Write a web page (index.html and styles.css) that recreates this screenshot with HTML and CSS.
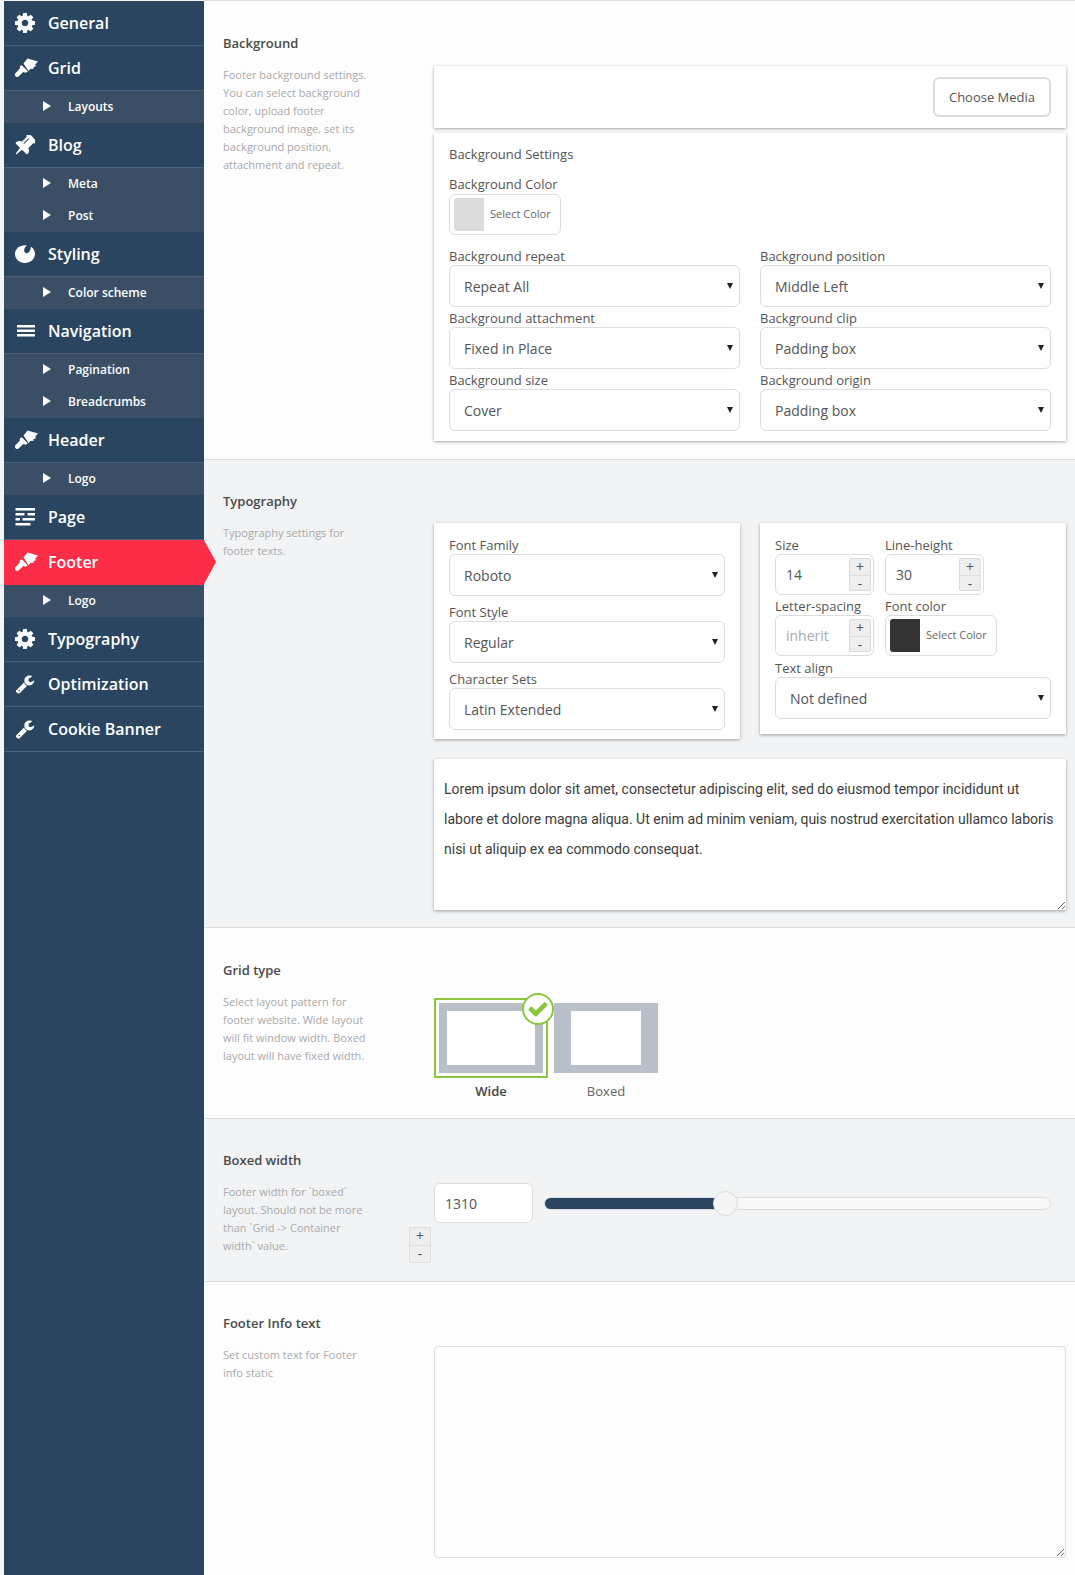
FILE: index.html
```html
<!DOCTYPE html>
<html lang="en">
<head>
  <meta charset="UTF-8">
  <title>Footer settings</title>
  <link rel="stylesheet" href="styles.css">
</head>
<body>
  <svg class="defs" width="0" height="0">
    <defs>
      <symbol id="i-cog" viewBox="0 0 1536 1536"><path d="M1024 768q0-106-75-181t-181-75-181 75-75 181 75 181 181 75 181-75 75-181zm512-109v222q0 12-8 23t-20 13l-185 28q-19 54-39 91 35 50 107 138 10 12 10 25t-9 23q-27 37-99 108t-94 71q-12 0-26-9l-138-108q-44 23-91 38-16 136-29 186-7 28-36 28h-222q-14 0-24.500-8.500t-11.500-21.500l-28-184q-49-16-90-37l-141 107q-10 9-25 9-14 0-25-11-126-114-165-168-7-10-7-23 0-12 8-23 15-21 51-66.500t54-70.500q-27-50-41-99l-183-27q-13-2-21-12.500t-8-23.500v-222q0-12 8-23t19-13l186-28q14-46 39-92-40-57-107-138-10-12-10-24 0-10 9-23 26-36 98.500-107.500t94.500-71.500q13 0 26 10l138 107q44-23 91-38 16-136 29-186 7-28 36-28h222q14 0 24.500 8.500t11.500 21.500l28 184q49 16 90 37l142-107q9-9 24-9 13 0 25 10 129 119 165 170 7 8 7 22 0 12-8 23-15 21-51 66.500t-54 70.500q26 50 41 98l183 28q13 2 21 12.500t8 23.500z"/></symbol>
      <symbol id="i-brush" viewBox="0 0 23 19"><path d="M8.500 5.500 12.500 0.500l10.500 3-3 3.200 1.300 1.300-3 1.200.4 1.500-3.400.2-1.800 2.200z"/><path d="M6.800 7.200l6 6-1.900 1.500-2.600-.7-4.500 4.300a2.300 2.300 0 0 1-3.200-.1 2.300 2.300 0 0 1 0-3.200l4.300-4.400-.1-2.300z"/></symbol>
      <symbol id="i-pin" viewBox="200 200 1392 1392"><path transform="rotate(45 896 896) translate(320 0)" d="M480 864v-448q0-14-9-23t-23-9-23 9-9 23v448q0 14 9 23t23 9 23-9 9-23zm672 352q0 26-19 45t-45 19h-429l-51 483q-2 12-10.500 20.500t-20.500 8.500h-1q-27 0-32-27l-76-485h-404q-26 0-45-19t-19-45q0-123 78.500-221.500t177.500-98.500v-512q-52 0-90-38t-38-90 38-90 90-38h640q52 0 90 38t38 90-38 90-90 38v512q99 0 177.500 98.500t78.500 221.500z"/></symbol>
      <symbol id="i-palette" viewBox="0 -1 20 20"><path d="M11.800.4C10 1.600 8.800 4 9.300 6.300c.4 1.800 2.600 2.500 4 1.400 1.500-1.200 2.300-3.600 2.700-6C18.400 3.300 20 5.800 20 8.800c0 5.200-4.400 9.200-10 9.200S0 14 0 9 4.800-.4 11.800.4z"/></symbol>
      <symbol id="i-bars" viewBox="-2 -4 20 20"><path d="M0 0h18v2.600H0zM0 4.500h18v2.600H0zM0 9h18v2.600H0z"/></symbol>
      <symbol id="i-page" viewBox="-.5 -1 20 20"><path d="M0 0h19.500v2.500H0zM0 5h9v2.500H0zM12 5h7.500v2.500H12zM0 10h4.500v2.500H0zM7 10h12.500v2.500H7zM0 15h15v2.500H0z"/></symbol>
      <symbol id="i-wrench" viewBox="0 0 1792 1792"><path d="M448 1472q0-26-19-45t-45-19-45 19-19 45 19 45 45 19 45-19 19-45zm644-420l-682 682q-37 37-90 37-52 0-91-37l-106-108q-38-36-38-90 0-53 38-91l681-681q39 98 114.500 173.500t173.500 114.500zm634-435q0 39-23 106-47 134-164.500 217.500t-258.500 83.500q-185 0-316.500-131.500t-131.500-316.500 131.500-316.500 316.500-131.500q58 0 121.500 16.500t107.500 46.500q16 11 16 28t-16 28l-293 169v224l193 107q5-3 79-48.500t135.500-81 70.500-35.500q15 0 23.500 10t8.500 25z"/></symbol>
    </defs>
  </svg>

  <nav class="sidebar">
    <a class="nav-item"><svg class="nav-icon"><use href="#i-cog"/></svg>General</a>
    <a class="nav-item"><svg class="nav-icon brush"><use href="#i-brush"/></svg>Grid</a>
    <div class="nav-sub">
      <a class="sub-item">Layouts</a>
    </div>
    <a class="nav-item"><svg class="nav-icon"><use href="#i-pin"/></svg>Blog</a>
    <div class="nav-sub">
      <a class="sub-item">Meta</a>
      <a class="sub-item">Post</a>
    </div>
    <a class="nav-item"><svg class="nav-icon"><use href="#i-palette"/></svg>Styling</a>
    <div class="nav-sub">
      <a class="sub-item">Color scheme</a>
    </div>
    <a class="nav-item"><svg class="nav-icon"><use href="#i-bars"/></svg>Navigation</a>
    <div class="nav-sub">
      <a class="sub-item">Pagination</a>
      <a class="sub-item">Breadcrumbs</a>
    </div>
    <a class="nav-item"><svg class="nav-icon brush"><use href="#i-brush"/></svg>Header</a>
    <div class="nav-sub">
      <a class="sub-item">Logo</a>
    </div>
    <a class="nav-item"><svg class="nav-icon"><use href="#i-page"/></svg>Page</a>
    <a class="nav-item active"><svg class="nav-icon brush"><use href="#i-brush"/></svg>Footer</a>
    <div class="nav-sub">
      <a class="sub-item">Logo</a>
    </div>
    <a class="nav-item"><svg class="nav-icon"><use href="#i-cog"/></svg>Typography</a>
    <a class="nav-item"><svg class="nav-icon"><use href="#i-wrench"/></svg>Optimization</a>
    <a class="nav-item"><svg class="nav-icon"><use href="#i-wrench"/></svg>Cookie Banner</a>
  </nav>

  <main class="content">
    <section class="section section-bg">
      <h3 class="section-title">Background</h3>
      <p class="section-desc">Footer background settings. You can select background color, upload footer background image, set its background position, attachment and repeat.</p>
      <div class="section-body">
        <div class="card media-card">
          <button class="media-btn">Choose Media</button>
        </div>
        <div class="card settings-card">
          <div class="card-title">Background Settings</div>
          <label class="label">Background Color</label>
          <div class="color-field">
            <span class="swatch swatch-light"></span>
            <span class="color-text">Select Color</span>
          </div>
          <div class="bg-grid">
            <div>
              <label class="label">Background repeat</label>
              <div class="select-wrap"><select><option>Repeat All</option></select></div>
            </div>
            <div>
              <label class="label">Background position</label>
              <div class="select-wrap"><select><option>Middle Left</option></select></div>
            </div>
            <div>
              <label class="label">Background attachment</label>
              <div class="select-wrap"><select><option>Fixed in Place</option></select></div>
            </div>
            <div>
              <label class="label">Background clip</label>
              <div class="select-wrap"><select><option>Padding box</option></select></div>
            </div>
            <div>
              <label class="label">Background size</label>
              <div class="select-wrap"><select><option>Cover</option></select></div>
            </div>
            <div>
              <label class="label">Background origin</label>
              <div class="select-wrap"><select><option>Padding box</option></select></div>
            </div>
          </div>
        </div>
      </div>
    </section>

    <section class="section alt section-type">
      <h3 class="section-title">Typography</h3>
      <p class="section-desc">Typography settings for footer texts.</p>
      <div class="type-grid">
        <div class="card font-card">
          <label class="label">Font Family</label>
          <div class="select-wrap"><select><option>Roboto</option></select></div>
          <label class="label">Font Style</label>
          <div class="select-wrap"><select><option>Regular</option></select></div>
          <label class="label">Character Sets</label>
          <div class="select-wrap"><select><option>Latin Extended</option></select></div>
        </div>
        <div class="card metrics-card">
          <div class="metrics-row">
            <div>
              <label class="label tight">Size</label>
              <div class="num-field">
                <input class="num-input" type="text" value="14">
                <div class="spin"><span>+</span><span>-</span></div>
              </div>
            </div>
            <div>
              <label class="label tight">Line-height</label>
              <div class="num-field">
                <input class="num-input" type="text" value="30">
                <div class="spin"><span>+</span><span>-</span></div>
              </div>
            </div>
          </div>
          <div class="metrics-row">
            <div>
              <label class="label tight">Letter-spacing</label>
              <div class="num-field">
                <input class="num-input" type="text" placeholder="inherit">
                <div class="spin"><span>+</span><span>-</span></div>
              </div>
            </div>
            <div>
              <label class="label tight">Font color</label>
              <div class="color-field">
                <span class="swatch swatch-dark"></span>
                <span class="color-text">Select Color</span>
              </div>
            </div>
          </div>
          <div class="align-field">
            <label class="label tight">Text align</label>
            <div class="select-wrap"><select><option>Not defined</option></select></div>
          </div>
        </div>
        <textarea class="preview">Lorem ipsum dolor sit amet, consectetur adipiscing elit, sed do eiusmod tempor incididunt ut labore et dolore magna aliqua. Ut enim ad minim veniam, quis nostrud exercitation ullamco laboris nisi ut aliquip ex ea commodo consequat.</textarea>
      </div>
    </section>

    <section class="section section-gridtype">
      <h3 class="section-title">Grid type</h3>
      <p class="section-desc">Select layout pattern for footer website. Wide layout will fit window width. Boxed layout will have fixed width.</p>
      <div class="layout-options">
        <div class="layout-option selected">
          <div class="layout-frame">
            <div class="layout-thumb thumb-wide"><span></span></div>
            <span class="layout-check">
              <svg viewBox="0 0 1792 1792"><path d="M1671 566q0 40-28 68l-724 724-136 136q-28 28-68 28t-68-28l-136-136-362-362q-28-28-28-68t28-68l136-136q28-28 68-28t68 28l294 295 656-657q28-28 68-28t68 28l136 136q28 28 28 68z"/></svg>
            </span>
          </div>
          <div class="layout-name">Wide</div>
        </div>
        <div class="layout-option">
          <div class="layout-frame">
            <div class="layout-thumb thumb-boxed"><span></span></div>
          </div>
          <div class="layout-name">Boxed</div>
        </div>
      </div>
    </section>

    <section class="section alt section-width">
      <h3 class="section-title">Boxed width</h3>
      <p class="section-desc">Footer width for `boxed` layout. Should not be more than `Grid -&gt; Container width` value.</p>
      <div class="slider-row">
        <div class="width-field">
          <input class="width-input" type="text" value="1310">
          <div class="spin spin-out"><span>+</span><span>-</span></div>
        </div>
        <div class="slider">
          <div class="slider-fill"></div>
          <div class="slider-handle"></div>
        </div>
      </div>
    </section>

    <section class="section section-info">
      <h3 class="section-title">Footer Info text</h3>
      <p class="section-desc">Set custom text for Footer info static</p>
      <textarea class="info-text"></textarea>
    </section>
  </main>
</body>
</html>
```

FILE: styles.css
```css
* {
  box-sizing: border-box;
}

body {
  margin: 0;
  padding-left: 4px;
  display: flex;
  min-height: 1575px;
  background-color: #f4f5f6;
  font-family: "Open Sans", Arial, sans-serif;
  color: #555;
}

.defs {
  position: absolute;
}

symbol {
  overflow: visible;
}

/* sidebar */
.sidebar {
  width: 200px;
  flex-shrink: 0;
  margin-top: 1px;
  background-color: #2a4560;
}

.nav-item {
  position: relative;
  display: flex;
  align-items: center;
  height: 45px;
  padding-bottom: 1px;
  border-bottom: 1px solid #4a6078;
  font-size: 16px;
  font-weight: 600;
  color: #fff;
}

.nav-icon {
  width: 20px;
  height: 20px;
  margin: 0 13px 0 11px;
  fill: #fff;
}

.nav-icon.brush {
  width: 23px;
  height: 19px;
  margin-right: 10px;
}

.nav-item.active {
  background-color: #fc2e47;
  border-bottom-color: #fc2e47;
}

.nav-item.active::after {
  content: "";
  position: absolute;
  left: 100%;
  top: 0;
  border-left: 12px solid #fc2e47;
  border-top: 22.5px solid transparent;
  border-bottom: 22.5px solid transparent;
}

.nav-sub {
  background-color: #3a4f66;
}

.sub-item {
  display: flex;
  align-items: center;
  height: 32px;
  padding: 0 0 2px 39px;
  font-size: 12px;
  font-weight: 600;
  color: #fff;
}

.sub-item::before {
  content: "";
  margin-right: 17px;
  border-left: 8px solid #fff;
  border-top: 5px solid transparent;
  border-bottom: 5px solid transparent;
}

/* main column */
.content {
  flex: 1;
  border-top: 1px solid #ddd;
}

.section {
  display: grid;
  grid-template-columns: 211px 1fr;
  align-items: start;
  padding: 32px 9px 18px 19px;
  background-color: #fdfdfd;
  border-bottom: 1px solid #ddd;
}

.section.alt {
  background-color: #f1f3f5;
}

.section-title {
  grid-column: 1 / -1;
  margin: 0 0 13px;
  font-size: 13px;
  line-height: 20px;
  font-weight: 600;
  color: #4a4a4a;
}

.section-desc {
  width: 150px;
  margin: 0;
  font-size: 11px;
  line-height: 18px;
  color: #aaa;
}

.section-body {
  display: flex;
  flex-direction: column;
  gap: 5px;
}

.card {
  background-color: #fff;
  box-shadow: 0 1px 3px rgba(0, 0, 0, 0.35);
}

.media-card {
  display: flex;
  justify-content: flex-end;
  height: 62px;
  padding: 11px 15px;
}

.media-btn {
  width: 118px;
  height: 40px;
  padding: 0;
  background-color: #fff;
  border: 2px solid #ddd;
  border-radius: 6px;
  font-family: inherit;
  font-size: 13px;
  color: #555;
}

.settings-card {
  padding: 11px 15px 10px;
}

.card-title {
  margin-bottom: 10px;
  font-size: 13px;
  line-height: 20px;
}

.label {
  display: block;
  font-size: 13px;
  line-height: 20px;
}

.label.tight {
  line-height: 18px;
}

.color-field {
  display: flex;
  align-items: center;
  gap: 6px;
  height: 41px;
  width: 112px;
  padding: 0 4px;
  border: 1px solid #ddd;
  border-radius: 6px;
  background-color: #fff;
}

.swatch {
  width: 30px;
  height: 33px;
  border-radius: 3px 0 0 3px;
}

.swatch-light {
  background-color: #dcdcdc;
}

.swatch-dark {
  background-color: #333;
}

.color-text {
  padding-bottom: 2px;
  font-size: 11px;
  color: #666;
}

.bg-grid {
  display: grid;
  grid-template-columns: 1fr 1fr;
  column-gap: 20px;
  margin-top: 10px;
}

.bg-grid .label,
.font-card .label {
  height: 20px;
  line-height: 22px;
}

.select-wrap {
  position: relative;
}

.select-wrap::after {
  content: "";
  position: absolute;
  right: 7px;
  top: 18px;
  border-top: 6px solid #222;
  border-left: 3px solid transparent;
  border-right: 3px solid transparent;
  pointer-events: none;
}

select {
  display: block;
  width: 100%;
  height: 42px;
  padding: 0 24px 0 14px;
  appearance: none;
  background-color: #fff;
  border: 1px solid #ddd;
  border-radius: 6px;
  font-family: inherit;
  font-size: 14px;
  color: #555;
}

/* typography */
.section-type {
  padding: 31px 9px 17px 19px;
}

.type-grid {
  display: grid;
  grid-template-columns: 1fr 1fr;
  gap: 20px;
  align-items: start;
  margin-top: -1px;
}

.font-card {
  display: flex;
  flex-direction: column;
  padding: 11px 15px 9px;
}

.font-card .select-wrap {
  margin-bottom: 5px;
}

.font-card .select-wrap:last-child {
  margin-bottom: 0;
}

.metrics-card {
  display: flex;
  flex-direction: column;
  gap: 2px;
  padding: 13px 15px 15px;
}

.align-field {
  margin-top: 1px;
}

.metrics-row {
  display: flex;
  gap: 11px;
}

.num-field {
  display: flex;
  width: 99px;
  height: 41px;
  padding: 3px 2px 3px 3px;
  background-color: #fff;
  border: 1px solid #ddd;
  border-radius: 6px;
}

.num-input {
  flex: 1;
  min-width: 0;
  padding: 0 0 0 7px;
  border: none;
  outline: none;
  background: none;
  font-family: inherit;
  font-size: 14px;
  color: #555;
}

.num-input::placeholder {
  color: #aaa;
  opacity: 1;
}

.spin {
  display: flex;
  flex-direction: column;
  flex-shrink: 0;
  width: 22px;
  background-color: #eee;
  border: 1px solid #ddd;
  border-radius: 2px;
}

.spin span {
  flex: 1;
  text-align: center;
  font-size: 14px;
  line-height: 16px;
  color: #555;
}

.spin span:first-child {
  border-bottom: 1px solid #ddd;
}

.preview {
  grid-column: 1 / -1;
  display: block;
  width: 100%;
  height: 151px;
  padding: 15px 10px;
  background-color: #fff;
  border: none;
  box-shadow: 0 1px 3px rgba(0, 0, 0, 0.35);
  font-family: Roboto, Arial, sans-serif;
  font-size: 14px;
  line-height: 30px;
  color: #3c3c3c;
}

/* grid type */
.section-gridtype {
  padding-bottom: 17px;
}

.layout-options {
  display: flex;
  gap: 1px;
  margin-top: 5px;
}

.layout-option {
  width: 114px;
}

.layout-frame {
  position: relative;
  padding: 3px;
  border: 2px solid transparent;
}

.selected .layout-frame {
  border-color: #8cc63f;
}

.layout-thumb {
  height: 70px;
  padding: 8px;
  background-color: #b8bfc9;
}

.thumb-boxed {
  padding: 8px 17px;
}

.layout-thumb span {
  display: block;
  height: 100%;
  background-color: #fff;
}

.layout-check {
  position: absolute;
  right: -8px;
  top: -7px;
  display: flex;
  align-items: center;
  justify-content: center;
  width: 32px;
  height: 32px;
  background-color: #fff;
  border: 2px solid #8cc63f;
  border-radius: 50%;
}

.layout-check svg {
  width: 22px;
  height: 22px;
  fill: #8cc63f;
}

.layout-name {
  margin-top: 3px;
  text-align: center;
  font-size: 13px;
  line-height: 20px;
  color: #666;
}

.selected .layout-name {
  font-weight: 600;
  color: #444;
}

/* boxed width */
.section-width {
  padding: 31px 9px 26px 19px;
}

.slider-row {
  display: flex;
  gap: 11px;
  padding-right: 15px;
}

.width-field {
  position: relative;
  flex-shrink: 0;
}

.width-input {
  display: block;
  width: 99px;
  height: 40px;
  padding: 0 10px;
  background-color: #fff;
  border: 1px solid #ddd;
  border-radius: 6px;
  font-family: inherit;
  font-size: 14px;
  color: #555;
}

.spin-out {
  position: absolute;
  left: -25px;
  top: 44px;
  width: 22px;
  height: 36px;
}

.slider {
  position: relative;
  flex: 1;
  height: 13px;
  margin-top: 14px;
  background-color: #f8f8f8;
  border: 1px solid #ddd;
  border-radius: 7px;
}

.slider-fill {
  width: 35%;
  height: 100%;
  background-color: #2a4560;
  border-radius: 6px 0 0 6px;
}

.slider-handle {
  position: absolute;
  left: 168px;
  top: -7px;
  width: 25px;
  height: 25px;
  background-color: #f5f5f5;
  border: 1px solid #ddd;
  border-radius: 50%;
}

/* footer info */
.section-info {
  padding: 31px 9px 17px 19px;
  border-bottom: none;
}

.info-text {
  display: block;
  width: 100%;
  height: 212px;
  background-color: #fdfdfd;
  border: 1px solid #ddd;
  border-radius: 4px;
}
```
